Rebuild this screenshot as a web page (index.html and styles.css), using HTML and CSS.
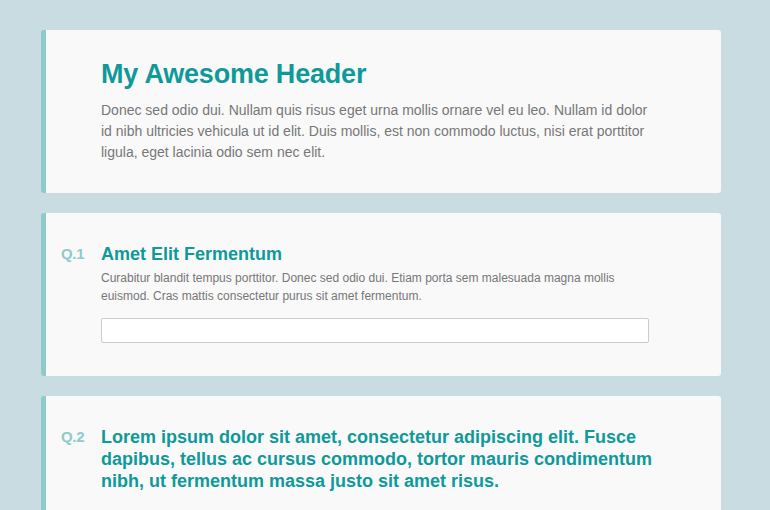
FILE: index.html
```html
<!DOCTYPE html>
<html lang="en">
<head>
	<meta charset="utf-8">
	<title>Survey</title>
	<link rel="stylesheet" href="styles.css">
</head>
<body>
<div id="page">
	<div class="card">
		<div class="num"></div>
		<div class="body">
			<h1>My Awesome Header</h1>
			<p class="intro">Donec sed odio dui. Nullam quis risus eget urna mollis ornare vel eu leo. Nullam id dolor id nibh ultricies vehicula ut id elit. Duis mollis, est non commodo luctus, nisi erat porttitor ligula, eget lacinia odio sem nec elit.</p>
		</div>
	</div>

	<div class="card">
		<div class="num">Q.1</div>
		<div class="body">
			<h2>Amet Elit Fermentum</h2>
			<p class="desc">Curabitur blandit tempus porttitor. Donec sed odio dui. Etiam porta sem malesuada magna mollis euismod. Cras mattis consectetur purus sit amet fermentum.</p>
			<input type="text" class="answer">
		</div>
	</div>

	<div class="card">
		<div class="num">Q.2</div>
		<div class="body">
			<h2>Lorem ipsum dolor sit amet, consectetur adipiscing elit. Fusce dapibus, tellus ac cursus commodo, tortor mauris condimentum nibh, ut fermentum massa justo sit amet risus.</h2>
			<div class="scale">
				<span class="dot"></span>
				<span class="dot"></span>
				<span class="dot"></span>
				<span class="dot"></span>
				<span class="dot"></span>
			</div>
		</div>
	</div>
</div>
</body>
</html>
```

FILE: styles.css
```css
html { background-color: #c9dce1; }
body {
	margin: 0;
	font-family: "Liberation Sans", Arial, sans-serif;
	color: #777;
}
#page {
	width: 680px;
	margin: 0 0 0 41px;
	padding: 30px 0;
}
.card {
	display: grid;
	grid-template-columns: 40px 560px;
	background-color: #f9f9f9;
	border-left: 5px solid #8ecacc;
	border-radius: 3px;
	padding: 30px 60px 30px 15px;
	margin-bottom: 20px;
}
.num {
	font-size: 15px;
	font-weight: bold;
	line-height: 22px;
	color: #8fcacc;
	letter-spacing: -0.3px;
}
h1 {
	margin: 0;
	font-size: 27px;
	line-height: 28px;
	letter-spacing: -0.2px;
	color: #0f9999;
}
.intro {
	margin: 12px 0 0;
	font-size: 14px;
	line-height: 21px;
}
h2 {
	margin: 0;
	font-size: 18px;
	line-height: 22px;
	color: #0f9999;
}
.desc {
	margin: 4px 0 0;
	font-size: 12px;
	line-height: 18px;
}
.answer {
	display: block;
	box-sizing: border-box;
	width: 548px;
	height: 25px;
	margin: 13px 0 3px;
	border: 1px solid #ccc;
	border-radius: 2px;
	background-color: white;
}
.scale {
	display: flex;
	gap: 71px;
	margin: 21px 0 0 117px;
}
.dot {
	width: 20px;
	height: 20px;
	border: 1px solid #ddd;
	border-radius: 50%;
	background-color: white;
}
```
